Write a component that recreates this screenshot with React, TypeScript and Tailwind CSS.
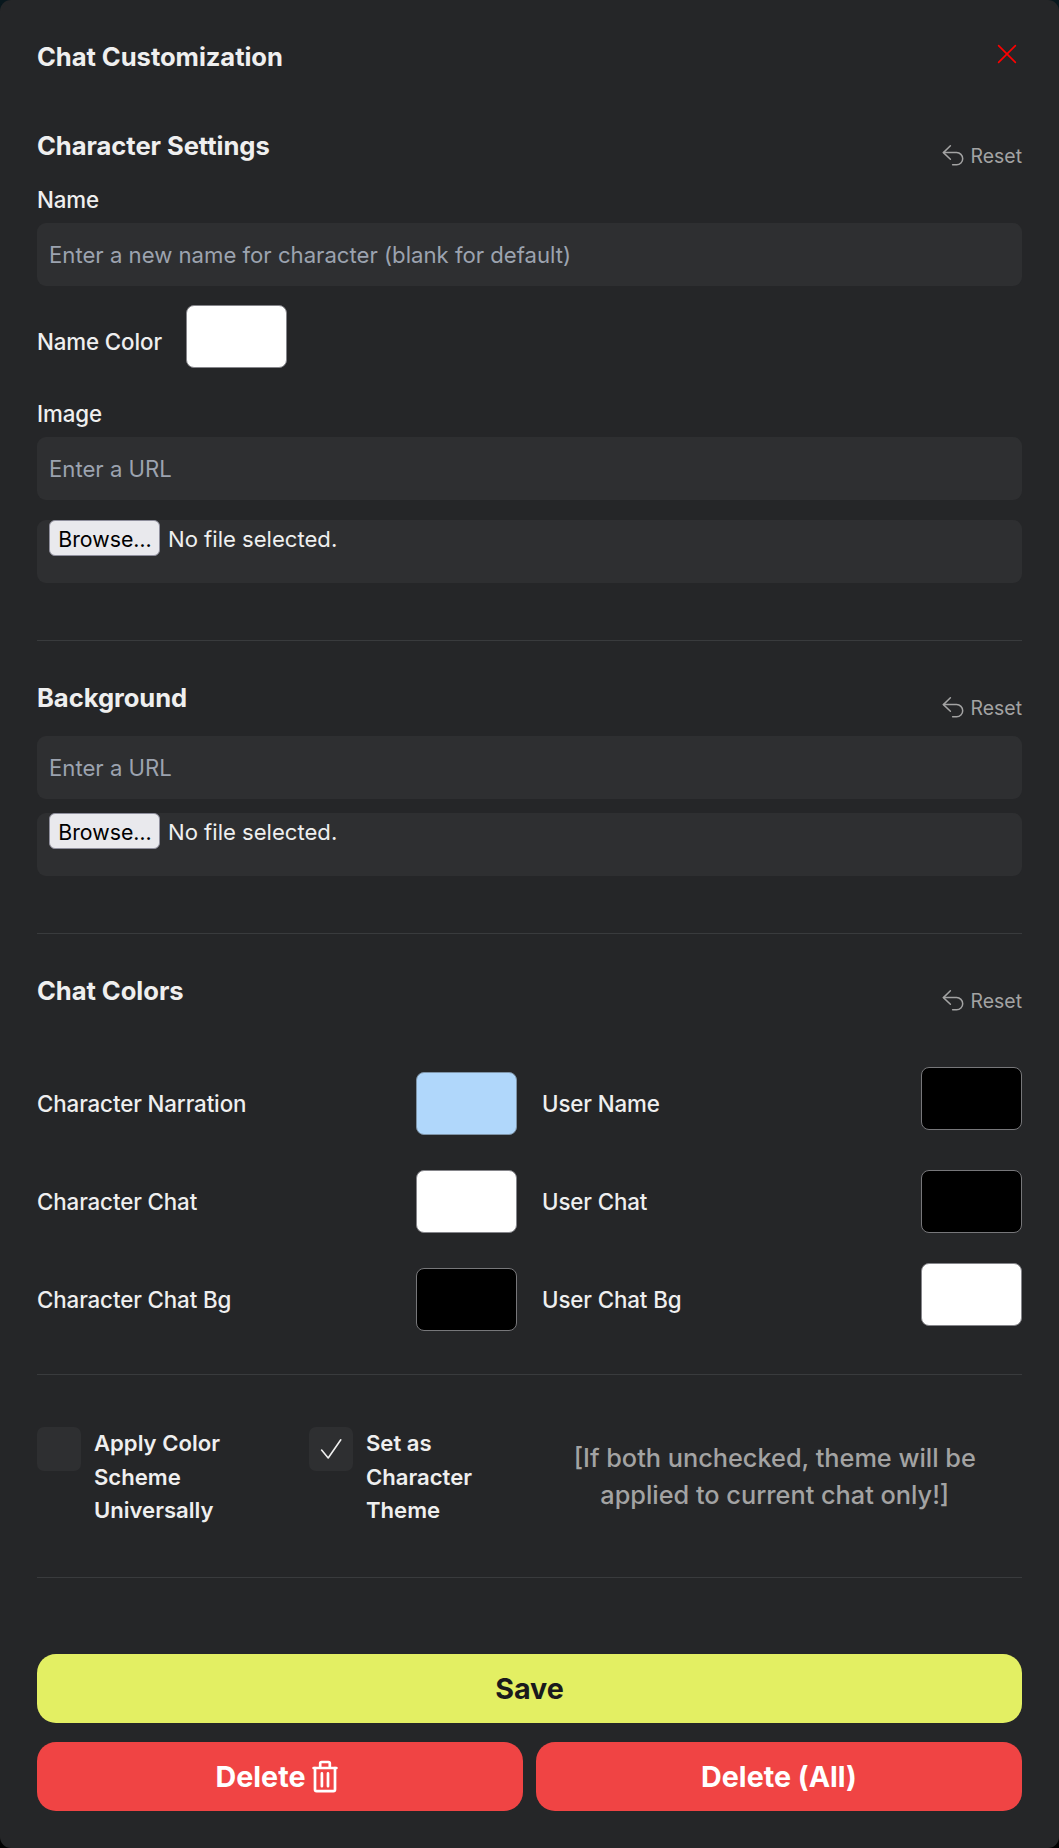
import React, { useState } from "react";

const labelClass = "text-[22.3px] leading-[32px] font-medium tracking-[-0.1px]";

function ResetButton() {
  return (
    <button className="mt-[13.5px] flex h-7 items-center gap-[7px] text-[19.4px] leading-7 text-[#a3a3a3]">
      <svg className="size-[23px]" viewBox="0 0 23 23" fill="none" stroke="currentColor" strokeWidth="1.5" strokeLinecap="round" strokeLinejoin="round">
        <path d="M9.4 1.8 2.4 8.6l7 6.6" />
        <path d="M2.4 8.6h13.2a6.1 6.1 0 0 1 0 12.2h-4" />
      </svg>
      Reset
    </button>
  );
}

function SectionHeader({ title }: { title: string }) {
  return (
    <div className="flex h-[46px] items-start justify-between">
      <h2 className="text-[25.6px] leading-[36px] font-bold tracking-[-0.06px]">{title}</h2>
      <ResetButton />
    </div>
  );
}

function TextField({ placeholder }: { placeholder: string }) {
  return (
    <input
      placeholder={placeholder}
      className="block h-[63px] w-full rounded-[9px] bg-[#2e2f31] px-[12px] text-[22.15px] outline-none placeholder:text-[#9ca3af]"
    />
  );
}

function FileField() {
  return (
    <div className="flex h-[63px] w-full items-start gap-[8px] rounded-[9px] bg-[#2e2f31] px-[12px]">
      <button className="h-[36px] w-[111px] rounded-[6px] border border-[#8f8f9d] bg-[#e9e9ed] pl-[1px] text-[21.3px] leading-[37px] text-black">
        Browse…
      </button>
      <span className="text-[22.1px] leading-[38px]">No file selected.</span>
    </div>
  );
}

function Swatch({ className }: { className: string }) {
  return <button className={`h-[63px] w-[101px] shrink-0 rounded-[8px] border ${className}`} />;
}

function ColorRow({ label, swatch }: { label: string; swatch: string }) {
  return (
    <div className="flex h-[63px] items-center justify-between">
      <span className={labelClass}>{label}</span>
      <Swatch className={swatch} />
    </div>
  );
}

function Divider() {
  return <hr className="h-px border-0 bg-[#393b3d]" />;
}

function CheckOption({ label, initial }: { label: string; initial: boolean }) {
  const [on, setOn] = useState(initial);
  return (
    <div className="flex items-start gap-[13px]">
      <button onClick={() => setOn(!on)} className="grid size-[44px] shrink-0 place-items-center rounded-[7px] bg-[#2e2f31]">
        {on && (
          <svg className="size-[24px]" viewBox="0 0 24 24" fill="none" stroke="#efefef" strokeWidth="1.6" strokeLinecap="round" strokeLinejoin="round">
            <path d="M2.6 13 9.2 21 21.8 2.8" />
          </svg>
        )}
      </button>
      <span className="w-[130px] text-[22.1px] leading-[33.5px] font-semibold">{label}</span>
    </div>
  );
}

export default function App() {
  return (
    <div className="h-[1848px] w-[1059px] bg-linear-to-b from-[#08171d] to-black font-['Inter',sans-serif] text-[#efefef]">
      <main className="h-full rounded-[11px] bg-[#252628] px-[37px] pt-[39px]">
        <div className="flex h-[89px] items-start justify-between">
          <h1 className="text-[25.6px] leading-[36px] font-bold tracking-[-0.06px]">Chat Customization</h1>
          <svg className="mt-[5px] mr-[5.5px] size-[20px]" viewBox="0 0 20 20" stroke="#ff0000" strokeWidth="1.6" strokeLinecap="round">
            <path d="m1.6 1.6 16.8 16.8M18.4 1.6 1.6 18.4" />
          </svg>
        </div>

        <section className="h-[512px]">
          <SectionHeader title="Character Settings" />
          <div className={`mt-[10px] mb-[7px] ${labelClass}`}>Name</div>
          <TextField placeholder="Enter a new name for character (blank for default)" />
          <div className="mt-[19px] flex h-[63px] items-start">
            <span className={`mt-[21px] w-[149px] ${labelClass}`}>Name Color</span>
            <Swatch className="border-[#85858a] bg-white" />
          </div>
          <div className={`mt-[30px] mb-[7px] ${labelClass}`}>Image</div>
          <TextField placeholder="Enter a URL" />
          <div className="mt-[20px]">
            <FileField />
          </div>
        </section>

        <Divider />

        <section className="h-[292px] pt-[39px]">
          <SectionHeader title="Background" />
          <div className="mt-[10px] flex flex-col gap-[14px]">
            <TextField placeholder="Enter a URL" />
            <FileField />
          </div>
        </section>

        <Divider />

        <section className="h-[440px] pt-[39px]">
          <SectionHeader title="Chat Colors" />
          <div className="mt-[53px] grid grid-cols-2 gap-x-[25px]">
            <div className="flex flex-col gap-[35px]">
              <ColorRow label="Character Narration" swatch="border-[#7e94a8] bg-[#b0d7fb]" />
              <ColorRow label="Character Chat" swatch="border-[#85858a] bg-white" />
              <ColorRow label="Character Chat Bg" swatch="border-[#77777a] bg-black" />
            </div>
            <div className="flex flex-col gap-[35px]">
              <ColorRow label="User Name" swatch="mb-[10px] border-[#77777a] bg-black" />
              <ColorRow label="User Chat" swatch="border-[#77777a] bg-black" />
              <ColorRow label="User Chat Bg" swatch="mb-[10px] border-[#85858a] bg-white" />
            </div>
          </div>
        </section>

        <Divider />

        <section className="grid h-[202px] grid-cols-2 items-start pt-[52px]">
          <div className="flex gap-[85px]">
            <CheckOption label="Apply Color Scheme Universally" initial={false} />
            <CheckOption label="Set as Character Theme" initial={true} />
          </div>
          <p className="mt-[12px] pr-[2px] text-center text-[25.3px] leading-[37.3px] font-medium text-[#a3a3a3]">
            [If both unchecked, theme will be
            <br />
            applied to current chat only!]
          </p>
        </section>

        <Divider />

        <div className="mt-[76px] grid grid-cols-2 gap-x-[13px] gap-y-[19px] text-[28.7px] font-[750]">
          <button className="col-span-2 h-[69px] rounded-[19px] bg-[#e3ef63] text-[#1a1a1c]">Save</button>
          <button className="flex h-[69px] items-center justify-center gap-[6px] rounded-[19px] bg-[#f04444] pr-[7px] text-white">
            Delete
            <svg className="h-[33px] w-[26px]" viewBox="0 0 26 33" fill="none" stroke="currentColor" strokeWidth="2.7" strokeLinecap="round" strokeLinejoin="round">
              <path d="M1.6 8h22.8" />
              <path d="M8.2 7.6V3.4q0-1.4 1.4-1.4h6.8q1.4 0 1.4 1.4v4.2" />
              <path d="M3 8v21.6q0 1.6 1.6 1.6h16.8q1.6 0 1.6-1.6V8" />
              <path d="M9.9 13.4v12.8M16 13.4v12.8" />
            </svg>
          </button>
          <button className="h-[69px] rounded-[19px] bg-[#f04444] text-white">Delete (All)</button>
        </div>
      </main>
    </div>
  );
}
